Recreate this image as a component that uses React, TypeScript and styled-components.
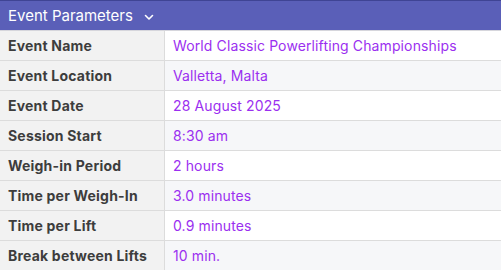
import React from 'react';
import styled, { createGlobalStyle } from 'styled-components';

const GlobalStyle = createGlobalStyle`
  html, body {
    margin: 0;
    padding: 0;
    background: #ffffff;
    font-family: Inter, "Noto Sans", sans-serif;
  }
`;

const Panel = styled.div`
  width: 501px;
  border-top: 1px solid #3f4494;
`;

const PanelHeader = styled.div`
  display: flex;
  align-items: center;
  gap: 10px;
  height: 29px;
  padding: 0 8px;
  background-color: #5a5fb8;
  color: #ffffff;
  font-size: 15px;
  border-bottom: 1px solid #d6d6dc;
`;

const Chevron = styled.svg`
  width: 12px;
  height: 12px;
  margin-top: 3px;
`;

const Grid = styled.div`
  display: grid;
  grid-template-columns: 165px 1fr;
`;

const Label = styled.div`
  height: 29px;
  display: flex;
  align-items: center;
  padding-left: 8px;
  background-color: #f2f2f2;
  border-right: 1px solid #dcdcdc;
  border-bottom: 1px solid #dcdcdc;
  color: #3d3d3d;
  font-weight: 700;
  font-size: 14px;
  letter-spacing: 0.2px;
`;

const Value = styled.div<{ $shaded: boolean }>`
  height: 29px;
  display: flex;
  align-items: center;
  padding-left: 8px;
  background-color: ${(p) => (p.$shaded ? '#f6f7f9' : '#ffffff')};
  border-bottom: 1px solid #dcdcdc;
  color: #9b2ff0;
  font-size: 14px;
  letter-spacing: 0.12px;
`;

const rows: [string, string][] = [
  ['Event Name', 'World Classic Powerlifting Championships'],
  ['Event Location', 'Valletta, Malta'],
  ['Event Date', '28 August 2025'],
  ['Session Start', '8:30 am'],
  ['Weigh-in Period', '2 hours'],
  ['Time per Weigh-In', '3.0 minutes'],
  ['Time per Lift', '0.9 minutes'],
  ['Break between Lifts', '10 min.'],
];

export default function App() {
  return (
    <>
      <GlobalStyle />
      <Panel>
        <PanelHeader>
          <span>Event Parameters</span>
          <Chevron viewBox="0 0 12 12" fill="none" stroke="#ffffff" strokeWidth="1.6" strokeLinecap="round" strokeLinejoin="round">
            <path d="M2.5 4.5 L6 8 L9.5 4.5" />
          </Chevron>
        </PanelHeader>
        <Grid>
          {rows.map(([label, value], i) => (
            <React.Fragment key={label}>
              <Label>{label}</Label>
              <Value $shaded={i % 2 === 1}>{value}</Value>
            </React.Fragment>
          ))}
        </Grid>
      </Panel>
    </>
  );
}
